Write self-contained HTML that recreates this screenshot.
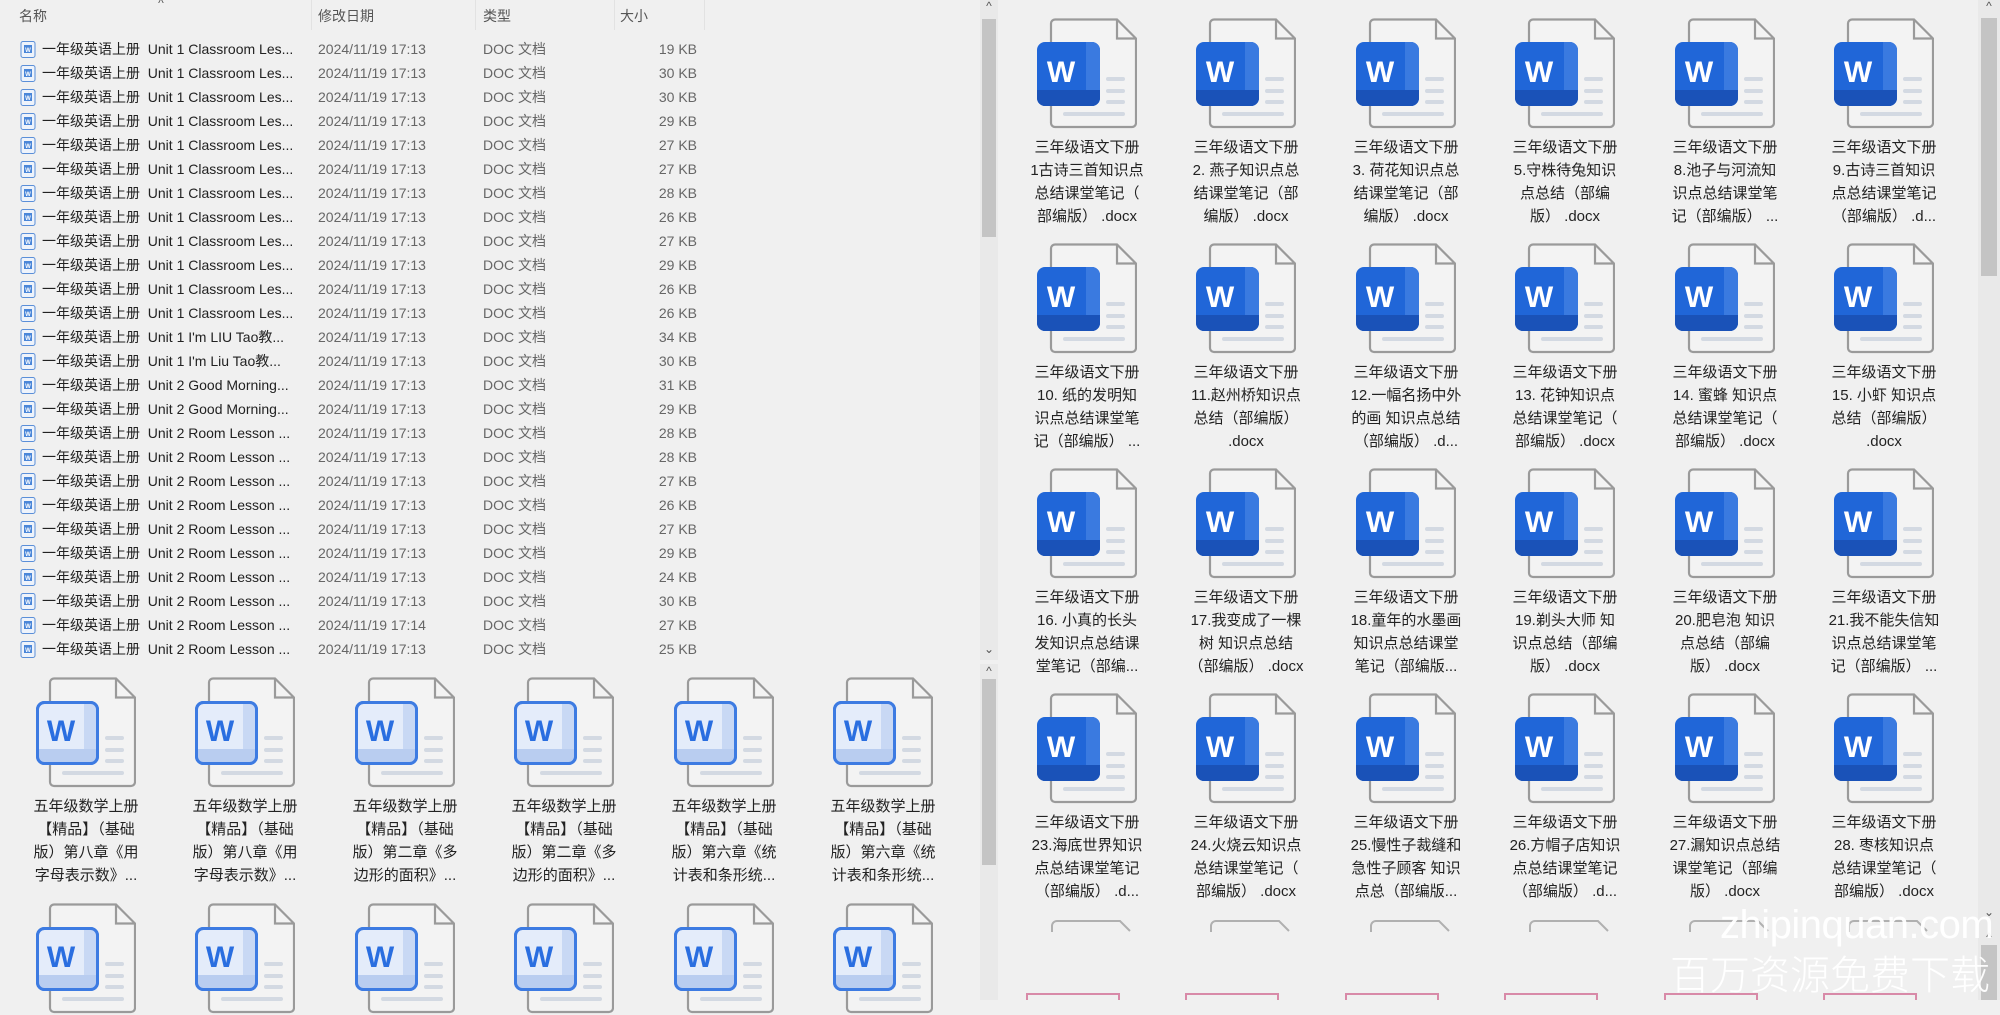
<!DOCTYPE html>
<html><head><meta charset="utf-8"><style>
*{margin:0;padding:0;box-sizing:border-box}
body{width:2000px;height:1000px;background:#f0f0f0;position:relative;overflow:hidden;font-family:"Liberation Sans","Noto Sans CJK SC",sans-serif;color:#222}
.hd{position:absolute;top:6px;font-size:14px;color:#555}
.sep{position:absolute;top:0;width:1px;height:30px;background:#e2e2e2}
.row{position:absolute;left:0;height:24px;font-size:14px;line-height:24px;white-space:nowrap}
.row .ic{position:absolute;left:20px;top:4px;width:16px;height:17px}
.row .n{position:absolute;left:42px;color:#222}
.row .d{position:absolute;left:318px;color:#666}
.row .t{position:absolute;left:483px;color:#666}
.row .s{position:absolute;right:-697px;width:80px;text-align:right;color:#666}
.it{position:absolute;width:160px}
.it svg{position:absolute;left:30px;top:0}
.it .tx{position:absolute;left:0;width:160px;text-align:center;font-size:15px;line-height:23px;white-space:nowrap;color:#222}
.sb{position:absolute;background:#e9e9e9}
.th{position:absolute;background:#c4c4c4}
.ar{position:absolute;font-size:12px;color:#555;width:18px;text-align:center}
</style></head><body>
<svg width="0" height="0" style="position:absolute">
<defs>
<symbol id="pg" viewBox="0 0 100 112">
<path d="M18,1.5 H80 L99,20.5 V105 a4,4 0 0 1 -4,4 H18 a4,4 0 0 1 -4,-4 V5.5 a4,4 0 0 1 4,-4 z" fill="#f3f3f3" stroke="#9a9a9a" stroke-width="2.2"/>
<path d="M80,1.5 V20.5 H99" fill="none" stroke="#9a9a9a" stroke-width="2.2"/>
<g stroke="#d3d9e2" stroke-width="4" stroke-linecap="round"><line x1="71" y1="61" x2="86" y2="61"/><line x1="71" y1="73" x2="86" y2="73"/><line x1="71" y1="84" x2="86" y2="84"/><line x1="28" y1="96" x2="86" y2="96"/></g>
</symbol>
<symbol id="ws" viewBox="0 0 100 112">
<use href="#pg"/>
<rect x="0" y="24" width="63" height="64" rx="8" fill="#2066d8"/>
<path d="M49,24 H55 a8,8 0 0 1 8,8 V80 a8,8 0 0 1 -8,8 H49 z" fill="#3a7ae0"/>
<path d="M0,72 H63 V80 a8,8 0 0 1 -8,8 H8 a8,8 0 0 1 -8,-8 z" fill="#1a52b8"/>
<text x="24" y="64" font-family="Liberation Sans" font-weight="bold" font-size="30" fill="#fff" text-anchor="middle">W</text>
</symbol>
<symbol id="wl" viewBox="0 0 100 112">
<use href="#pg"/>
<rect x="1.5" y="25.5" width="60" height="61" rx="7" fill="#e4ecfa" stroke="#3d7be2" stroke-width="3"/>
<rect x="48" y="27" width="12" height="58" fill="#c8d8f4"/>
<rect x="3" y="72" width="57" height="13" fill="#b9cdf0"/>
<rect x="1.5" y="25.5" width="60" height="61" rx="7" fill="none" stroke="#3d7be2" stroke-width="3"/>
<text x="25" y="64" font-family="Liberation Sans" font-weight="bold" font-size="30" fill="#2a6ee0" text-anchor="middle">W</text>
</symbol>
<symbol id="sm" viewBox="0 0 16 17">
<rect x="1" y="0.5" width="14" height="16" rx="2" fill="#eef3fb" stroke="#5b8fd8"/>
<rect x="4" y="4" width="8" height="8" fill="#4a86d8"/>
<text x="8" y="11" font-size="6" font-family="Liberation Sans" font-weight="bold" fill="#fff" text-anchor="middle">W</text>
</symbol>
</defs></svg>

<div class="ar" style="left:152px;top:-4px">^</div>
<div class="hd" style="left:19px">名称</div>
<div class="hd" style="left:318px">修改日期</div>
<div class="hd" style="left:483px">类型</div>
<div class="hd" style="left:620px">大小</div>
<div class="sep" style="left:311px"></div><div class="sep" style="left:475px"></div><div class="sep" style="left:614px"></div><div class="sep" style="left:704px"></div>

<div class="row" style="top:37px"><svg class="ic"><use href="#sm"/></svg><span class="n">一年级英语上册&nbsp; Unit 1 Classroom Les...</span><span class="d">2024/11/19 17:13</span><span class="t">DOC 文档</span><span class="s" style="left:617px">19 KB</span></div>
<div class="row" style="top:61px"><svg class="ic"><use href="#sm"/></svg><span class="n">一年级英语上册&nbsp; Unit 1 Classroom Les...</span><span class="d">2024/11/19 17:13</span><span class="t">DOC 文档</span><span class="s" style="left:617px">30 KB</span></div>
<div class="row" style="top:85px"><svg class="ic"><use href="#sm"/></svg><span class="n">一年级英语上册&nbsp; Unit 1 Classroom Les...</span><span class="d">2024/11/19 17:13</span><span class="t">DOC 文档</span><span class="s" style="left:617px">30 KB</span></div>
<div class="row" style="top:109px"><svg class="ic"><use href="#sm"/></svg><span class="n">一年级英语上册&nbsp; Unit 1 Classroom Les...</span><span class="d">2024/11/19 17:13</span><span class="t">DOC 文档</span><span class="s" style="left:617px">29 KB</span></div>
<div class="row" style="top:133px"><svg class="ic"><use href="#sm"/></svg><span class="n">一年级英语上册&nbsp; Unit 1 Classroom Les...</span><span class="d">2024/11/19 17:13</span><span class="t">DOC 文档</span><span class="s" style="left:617px">27 KB</span></div>
<div class="row" style="top:157px"><svg class="ic"><use href="#sm"/></svg><span class="n">一年级英语上册&nbsp; Unit 1 Classroom Les...</span><span class="d">2024/11/19 17:13</span><span class="t">DOC 文档</span><span class="s" style="left:617px">27 KB</span></div>
<div class="row" style="top:181px"><svg class="ic"><use href="#sm"/></svg><span class="n">一年级英语上册&nbsp; Unit 1 Classroom Les...</span><span class="d">2024/11/19 17:13</span><span class="t">DOC 文档</span><span class="s" style="left:617px">28 KB</span></div>
<div class="row" style="top:205px"><svg class="ic"><use href="#sm"/></svg><span class="n">一年级英语上册&nbsp; Unit 1 Classroom Les...</span><span class="d">2024/11/19 17:13</span><span class="t">DOC 文档</span><span class="s" style="left:617px">26 KB</span></div>
<div class="row" style="top:229px"><svg class="ic"><use href="#sm"/></svg><span class="n">一年级英语上册&nbsp; Unit 1 Classroom Les...</span><span class="d">2024/11/19 17:13</span><span class="t">DOC 文档</span><span class="s" style="left:617px">27 KB</span></div>
<div class="row" style="top:253px"><svg class="ic"><use href="#sm"/></svg><span class="n">一年级英语上册&nbsp; Unit 1 Classroom Les...</span><span class="d">2024/11/19 17:13</span><span class="t">DOC 文档</span><span class="s" style="left:617px">29 KB</span></div>
<div class="row" style="top:277px"><svg class="ic"><use href="#sm"/></svg><span class="n">一年级英语上册&nbsp; Unit 1 Classroom Les...</span><span class="d">2024/11/19 17:13</span><span class="t">DOC 文档</span><span class="s" style="left:617px">26 KB</span></div>
<div class="row" style="top:301px"><svg class="ic"><use href="#sm"/></svg><span class="n">一年级英语上册&nbsp; Unit 1 Classroom Les...</span><span class="d">2024/11/19 17:13</span><span class="t">DOC 文档</span><span class="s" style="left:617px">26 KB</span></div>
<div class="row" style="top:325px"><svg class="ic"><use href="#sm"/></svg><span class="n">一年级英语上册&nbsp; Unit 1 I'm LIU Tao教...</span><span class="d">2024/11/19 17:13</span><span class="t">DOC 文档</span><span class="s" style="left:617px">34 KB</span></div>
<div class="row" style="top:349px"><svg class="ic"><use href="#sm"/></svg><span class="n">一年级英语上册&nbsp; Unit 1 I'm Liu Tao教...</span><span class="d">2024/11/19 17:13</span><span class="t">DOC 文档</span><span class="s" style="left:617px">30 KB</span></div>
<div class="row" style="top:373px"><svg class="ic"><use href="#sm"/></svg><span class="n">一年级英语上册&nbsp; Unit 2 Good Morning...</span><span class="d">2024/11/19 17:13</span><span class="t">DOC 文档</span><span class="s" style="left:617px">31 KB</span></div>
<div class="row" style="top:397px"><svg class="ic"><use href="#sm"/></svg><span class="n">一年级英语上册&nbsp; Unit 2 Good Morning...</span><span class="d">2024/11/19 17:13</span><span class="t">DOC 文档</span><span class="s" style="left:617px">29 KB</span></div>
<div class="row" style="top:421px"><svg class="ic"><use href="#sm"/></svg><span class="n">一年级英语上册&nbsp; Unit 2 Room Lesson ...</span><span class="d">2024/11/19 17:13</span><span class="t">DOC 文档</span><span class="s" style="left:617px">28 KB</span></div>
<div class="row" style="top:445px"><svg class="ic"><use href="#sm"/></svg><span class="n">一年级英语上册&nbsp; Unit 2 Room Lesson ...</span><span class="d">2024/11/19 17:13</span><span class="t">DOC 文档</span><span class="s" style="left:617px">28 KB</span></div>
<div class="row" style="top:469px"><svg class="ic"><use href="#sm"/></svg><span class="n">一年级英语上册&nbsp; Unit 2 Room Lesson ...</span><span class="d">2024/11/19 17:13</span><span class="t">DOC 文档</span><span class="s" style="left:617px">27 KB</span></div>
<div class="row" style="top:493px"><svg class="ic"><use href="#sm"/></svg><span class="n">一年级英语上册&nbsp; Unit 2 Room Lesson ...</span><span class="d">2024/11/19 17:13</span><span class="t">DOC 文档</span><span class="s" style="left:617px">26 KB</span></div>
<div class="row" style="top:517px"><svg class="ic"><use href="#sm"/></svg><span class="n">一年级英语上册&nbsp; Unit 2 Room Lesson ...</span><span class="d">2024/11/19 17:13</span><span class="t">DOC 文档</span><span class="s" style="left:617px">27 KB</span></div>
<div class="row" style="top:541px"><svg class="ic"><use href="#sm"/></svg><span class="n">一年级英语上册&nbsp; Unit 2 Room Lesson ...</span><span class="d">2024/11/19 17:13</span><span class="t">DOC 文档</span><span class="s" style="left:617px">29 KB</span></div>
<div class="row" style="top:565px"><svg class="ic"><use href="#sm"/></svg><span class="n">一年级英语上册&nbsp; Unit 2 Room Lesson ...</span><span class="d">2024/11/19 17:13</span><span class="t">DOC 文档</span><span class="s" style="left:617px">24 KB</span></div>
<div class="row" style="top:589px"><svg class="ic"><use href="#sm"/></svg><span class="n">一年级英语上册&nbsp; Unit 2 Room Lesson ...</span><span class="d">2024/11/19 17:13</span><span class="t">DOC 文档</span><span class="s" style="left:617px">30 KB</span></div>
<div class="row" style="top:613px"><svg class="ic"><use href="#sm"/></svg><span class="n">一年级英语上册&nbsp; Unit 2 Room Lesson ...</span><span class="d">2024/11/19 17:14</span><span class="t">DOC 文档</span><span class="s" style="left:617px">27 KB</span></div>
<div class="row" style="top:637px"><svg class="ic"><use href="#sm"/></svg><span class="n">一年级英语上册&nbsp; Unit 2 Room Lesson ...</span><span class="d">2024/11/19 17:13</span><span class="t">DOC 文档</span><span class="s" style="left:617px">25 KB</span></div>

<div class="sb" style="left:980px;top:0;width:18px;height:660px"></div>
<div class="th" style="left:982px;top:19px;width:14px;height:218px"></div>
<div class="ar" style="left:980px;top:-1px">^</div>
<div class="ar" style="left:980px;top:642px">&#8964;</div>
<div class="sb" style="left:980px;top:664px;width:18px;height:336px"></div>
<div class="ar" style="left:980px;top:664px">^</div>
<div class="th" style="left:982px;top:679px;width:14px;height:186px"></div>

<div class="it" style="left:6px;top:677px"><svg width="100" height="112"><use href="#wl"/></svg><div class="tx" style="top:118px">五年级数学上册<br>【精品】（基础<br>版）第八章《用<br>字母表示数》...</div></div>
<div class="it" style="left:165px;top:677px"><svg width="100" height="112"><use href="#wl"/></svg><div class="tx" style="top:118px">五年级数学上册<br>【精品】（基础<br>版）第八章《用<br>字母表示数》...</div></div>
<div class="it" style="left:325px;top:677px"><svg width="100" height="112"><use href="#wl"/></svg><div class="tx" style="top:118px">五年级数学上册<br>【精品】（基础<br>版）第二章《多<br>边形的面积》...</div></div>
<div class="it" style="left:484px;top:677px"><svg width="100" height="112"><use href="#wl"/></svg><div class="tx" style="top:118px">五年级数学上册<br>【精品】（基础<br>版）第二章《多<br>边形的面积》...</div></div>
<div class="it" style="left:644px;top:677px"><svg width="100" height="112"><use href="#wl"/></svg><div class="tx" style="top:118px">五年级数学上册<br>【精品】（基础<br>版）第六章《统<br>计表和条形统...</div></div>
<div class="it" style="left:803px;top:677px"><svg width="100" height="112"><use href="#wl"/></svg><div class="tx" style="top:118px">五年级数学上册<br>【精品】（基础<br>版）第六章《统<br>计表和条形统...</div></div>
<div class="it" style="left:6px;top:903px"><svg width="100" height="112"><use href="#wl"/></svg></div>
<div class="it" style="left:165px;top:903px"><svg width="100" height="112"><use href="#wl"/></svg></div>
<div class="it" style="left:325px;top:903px"><svg width="100" height="112"><use href="#wl"/></svg></div>
<div class="it" style="left:484px;top:903px"><svg width="100" height="112"><use href="#wl"/></svg></div>
<div class="it" style="left:644px;top:903px"><svg width="100" height="112"><use href="#wl"/></svg></div>
<div class="it" style="left:803px;top:903px"><svg width="100" height="112"><use href="#wl"/></svg></div>

<div class="it" style="left:1007px;top:18px"><svg width="100" height="112"><use href="#ws"/></svg><div class="tx" style="top:118px">三年级语文下册<br>1古诗三首知识点<br>总结课堂笔记（<br>部编版） .docx</div></div>
<div class="it" style="left:1166px;top:18px"><svg width="100" height="112"><use href="#ws"/></svg><div class="tx" style="top:118px">三年级语文下册<br>2. 燕子知识点总<br>结课堂笔记（部<br>编版） .docx</div></div>
<div class="it" style="left:1326px;top:18px"><svg width="100" height="112"><use href="#ws"/></svg><div class="tx" style="top:118px">三年级语文下册<br>3. 荷花知识点总<br>结课堂笔记（部<br>编版） .docx</div></div>
<div class="it" style="left:1485px;top:18px"><svg width="100" height="112"><use href="#ws"/></svg><div class="tx" style="top:118px">三年级语文下册<br>5.守株待兔知识<br>点总结（部编<br>版） .docx</div></div>
<div class="it" style="left:1645px;top:18px"><svg width="100" height="112"><use href="#ws"/></svg><div class="tx" style="top:118px">三年级语文下册<br>8.池子与河流知<br>识点总结课堂笔<br>记（部编版） ...</div></div>
<div class="it" style="left:1804px;top:18px"><svg width="100" height="112"><use href="#ws"/></svg><div class="tx" style="top:118px">三年级语文下册<br>9.古诗三首知识<br>点总结课堂笔记<br>（部编版） .d...</div></div>

<div class="it" style="left:1007px;top:243px"><svg width="100" height="112"><use href="#ws"/></svg><div class="tx" style="top:118px">三年级语文下册<br>10. 纸的发明知<br>识点总结课堂笔<br>记（部编版） ...</div></div>
<div class="it" style="left:1166px;top:243px"><svg width="100" height="112"><use href="#ws"/></svg><div class="tx" style="top:118px">三年级语文下册<br>11.赵州桥知识点<br>总结（部编版）<br>.docx</div></div>
<div class="it" style="left:1326px;top:243px"><svg width="100" height="112"><use href="#ws"/></svg><div class="tx" style="top:118px">三年级语文下册<br>12.一幅名扬中外<br>的画 知识点总结<br>（部编版） .d...</div></div>
<div class="it" style="left:1485px;top:243px"><svg width="100" height="112"><use href="#ws"/></svg><div class="tx" style="top:118px">三年级语文下册<br>13. 花钟知识点<br>总结课堂笔记（<br>部编版） .docx</div></div>
<div class="it" style="left:1645px;top:243px"><svg width="100" height="112"><use href="#ws"/></svg><div class="tx" style="top:118px">三年级语文下册<br>14. 蜜蜂 知识点<br>总结课堂笔记（<br>部编版） .docx</div></div>
<div class="it" style="left:1804px;top:243px"><svg width="100" height="112"><use href="#ws"/></svg><div class="tx" style="top:118px">三年级语文下册<br>15. 小虾 知识点<br>总结（部编版）<br>.docx</div></div>

<div class="it" style="left:1007px;top:468px"><svg width="100" height="112"><use href="#ws"/></svg><div class="tx" style="top:118px">三年级语文下册<br>16. 小真的长头<br>发知识点总结课<br>堂笔记（部编...</div></div>
<div class="it" style="left:1166px;top:468px"><svg width="100" height="112"><use href="#ws"/></svg><div class="tx" style="top:118px">三年级语文下册<br>17.我变成了一棵<br>树 知识点总结<br>（部编版） .docx</div></div>
<div class="it" style="left:1326px;top:468px"><svg width="100" height="112"><use href="#ws"/></svg><div class="tx" style="top:118px">三年级语文下册<br>18.童年的水墨画<br>知识点总结课堂<br>笔记（部编版...</div></div>
<div class="it" style="left:1485px;top:468px"><svg width="100" height="112"><use href="#ws"/></svg><div class="tx" style="top:118px">三年级语文下册<br>19.剃头大师 知<br>识点总结（部编<br>版） .docx</div></div>
<div class="it" style="left:1645px;top:468px"><svg width="100" height="112"><use href="#ws"/></svg><div class="tx" style="top:118px">三年级语文下册<br>20.肥皂泡 知识<br>点总结（部编<br>版） .docx</div></div>
<div class="it" style="left:1804px;top:468px"><svg width="100" height="112"><use href="#ws"/></svg><div class="tx" style="top:118px">三年级语文下册<br>21.我不能失信知<br>识点总结课堂笔<br>记（部编版） ...</div></div>

<div class="it" style="left:1007px;top:693px"><svg width="100" height="112"><use href="#ws"/></svg><div class="tx" style="top:118px">三年级语文下册<br>23.海底世界知识<br>点总结课堂笔记<br>（部编版） .d...</div></div>
<div class="it" style="left:1166px;top:693px"><svg width="100" height="112"><use href="#ws"/></svg><div class="tx" style="top:118px">三年级语文下册<br>24.火烧云知识点<br>总结课堂笔记（<br>部编版） .docx</div></div>
<div class="it" style="left:1326px;top:693px"><svg width="100" height="112"><use href="#ws"/></svg><div class="tx" style="top:118px">三年级语文下册<br>25.慢性子裁缝和<br>急性子顾客 知识<br>点总（部编版...</div></div>
<div class="it" style="left:1485px;top:693px"><svg width="100" height="112"><use href="#ws"/></svg><div class="tx" style="top:118px">三年级语文下册<br>26.方帽子店知识<br>点总结课堂笔记<br>（部编版） .d...</div></div>
<div class="it" style="left:1645px;top:693px"><svg width="100" height="112"><use href="#ws"/></svg><div class="tx" style="top:118px">三年级语文下册<br>27.漏知识点总结<br>课堂笔记（部编<br>版） .docx</div></div>
<div class="it" style="left:1804px;top:693px"><svg width="100" height="112"><use href="#ws"/></svg><div class="tx" style="top:118px">三年级语文下册<br>28. 枣核知识点<br>总结课堂笔记（<br>部编版） .docx</div></div>

<svg style="position:absolute;left:1000px;top:910px" width="978" height="90">
<g fill="none" stroke="#b0b0b0" stroke-width="2">
<path d="M52,22 V16 a5,5 0 0 1 5,-5 H120 L130,21"/>
<path d="M211,22 V16 a5,5 0 0 1 5,-5 H279 L289,21"/>
<path d="M371,22 V16 a5,5 0 0 1 5,-5 H439 L449,21"/>
<path d="M530,22 V16 a5,5 0 0 1 5,-5 H598 L608,21"/>
<path d="M690,22 V16 a5,5 0 0 1 5,-5 H758 L768,21"/>
<path d="M849,22 V16 a5,5 0 0 1 5,-5 H917 L927,21"/>
</g>
<g fill="none" stroke="#d88aa8" stroke-width="2">
<path d="M27,90 V84 H119 V90"/><path d="M186,90 V84 H278 V90"/><path d="M346,90 V84 H438 V90"/>
<path d="M505,90 V84 H597 V90"/><path d="M665,90 V84 H757 V90"/><path d="M824,90 V84 H916 V90"/>
</g>
</svg>

<div class="sb" style="left:1978px;top:0;width:22px;height:1000px"></div>
<div class="ar" style="left:1980px;top:-1px">^</div>
<div class="th" style="left:1981px;top:18px;width:16px;height:258px"></div>
<div class="ar" style="left:1980px;top:905px">&#8964;</div>
<div class="ar" style="left:1980px;top:930px">^</div>
<div class="th" style="left:1981px;top:945px;width:16px;height:55px"></div>

<div style="position:absolute;left:1720px;top:900px;font-size:40px;line-height:50px;color:rgba(255,255,255,0.95);font-family:'Liberation Sans',sans-serif;letter-spacing:-0.5px;white-space:nowrap">zhipinquan.com</div>
<div style="position:absolute;left:1670px;top:947px;font-size:40px;line-height:50px;color:rgba(255,255,255,0.95);font-family:'Noto Sans CJK SC',sans-serif;font-weight:300;white-space:nowrap">百万资源免费下载</div>
</body></html>
